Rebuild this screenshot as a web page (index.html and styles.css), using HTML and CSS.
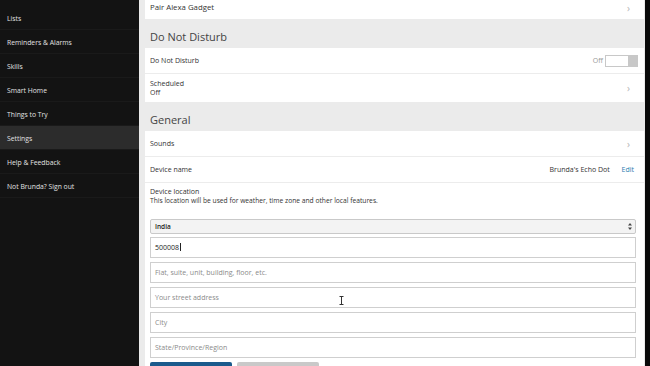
FILE: index.html
```html
<!doctype html>
<html lang="en">
<head>
<meta charset="utf-8">
<title>Alexa Settings</title>
<link rel="stylesheet" href="styles.css">
</head>
<body>

<div class="app">
	<nav class="sidebar">
		<ul>
			<li>Lists</li>
			<li>Reminders &amp; Alarms</li>
			<li>Skills</li>
			<li>Smart Home</li>
			<li>Things to Try</li>
			<li class="--active">Settings</li>
			<li>Help &amp; Feedback</li>
			<li>Not Brunda? Sign out</li>
		</ul>
	</nav>

	<main class="main">
		<div class="card">
			<div class="row row--top">
				<span class="row__big">Pair Alexa Gadget</span>
				<span class="chevron">&rsaquo;</span>
			</div>
		</div>

		<h2 class="section-title">Do Not Disturb</h2>

		<div class="card">
			<div class="row">
				<span>Do Not Disturb</span>
				<span class="toggle-wrap">Off <span class="toggle"><span class="toggle__knob"></span></span></span>
			</div>
			<div class="row row--tall">
				<span class="two-line">Scheduled<br>Off</span>
				<span class="chevron">&rsaquo;</span>
			</div>
		</div>

		<h2 class="section-title">General</h2>

		<div class="card">
			<div class="row">
				<span>Sounds</span>
				<span class="chevron">&rsaquo;</span>
			</div>
			<div class="row">
				<span>Device name</span>
				<span class="device-name">Brunda's Echo Dot <a class="edit">Edit</a></span>
			</div>
			<div class="location">
				<div class="two-line">Device location<br><span class="hint">This location will be used for weather, time zone and other local features.</span></div>

				<div class="form">
					<div class="select">
						<span>India</span>
						<svg class="select__arrows" width="4" height="7" viewBox="0 0 4 7"><path d="M2 0L4 2.5H0z M2 7L4 4.5H0z" fill="#444"/></svg>
					</div>
					<div class="field field--filled">500008<span class="caret"></span></div>
					<div class="field">Flat, suite, unit, building, floor, etc.</div>
					<div class="field">Your street address</div>
					<div class="field">City</div>
					<div class="field">State/Province/Region</div>
					<div class="buttons">
						<span class="btn btn--save"></span>
						<span class="btn btn--cancel"></span>
					</div>
				</div>
			</div>
		</div>

		<svg class="ibeam" width="5" height="9" viewBox="0 0 5 9"><path d="M0.5 0.5h4M2.5 0.5v8M0.5 8.5h4" stroke="#333" stroke-width="1" fill="none"/></svg>
	</main>

	<div class="edge"></div>
</div>

</body>
</html>
```

FILE: styles.css
```css
html, body {
	margin: 0;
	padding: 0;
	height: 100%;
	overflow: hidden;
}

body {
	font-family: "Open Sans", "Liberation Sans", sans-serif;
	font-size: 7px;
	color: #333;
	background: #111;
}

.app {
	display: flex;
	height: 366px;
}

.sidebar {
	width: 139px;
	flex: none;
	background: #131313;
	padding-top: 6px;
}

.sidebar ul {
	margin: 0;
	padding: 0;
	list-style: none;
}

.sidebar li {
	height: 23px;
	line-height: 25px;
	padding-left: 7px;
	color: #e2e2e2;
	font-size: 6.8px;
	border-bottom: 1px solid #1a1a1a;
}

.sidebar li.--active {
	background: #2c2c2c;
}

.main {
	position: relative;
	flex: 1;
	background: #ebebeb;
	padding: 0 1px 0 6px;
	overflow: hidden;
}

.edge {
	width: 5px;
	flex: none;
	background: #0a0a0a;
}

.card {
	background: #fff;
}

.row {
	display: flex;
	align-items: center;
	justify-content: space-between;
	height: 25px;
	padding: 0 14px 0 5px;
	border-top: 1px solid #ececec;
}

.row:first-child {
	border-top: 0;
}

.row--top {
	height: 19px;
	align-items: flex-start;
	padding-top: 2px;
	box-sizing: border-box;
}

.row--top .chevron {
	margin-top: -1px;
}

.row__big {
	font-size: 7.8px;
}

.row--tall {
	height: 28px;
}

.two-line {
	line-height: 9px;
}

.hint {
	font-size: 6.7px;
}

.chevron {
	color: #b5b5b5;
	font-size: 10px;
}

.section-title {
	margin: 0;
	height: 29px;
	line-height: 35px;
	padding-left: 5px;
	font-size: 11px;
	font-weight: normal;
	color: #444;
}

.toggle-wrap {
	display: flex;
	align-items: center;
	gap: 2px;
	margin-right: -8px;
	color: #999;
}

.toggle {
	display: flex;
	justify-content: flex-end;
	width: 31px;
	height: 10px;
	border: 1px solid #c8c8c8;
	background: #fff;
}

.toggle__knob {
	width: 9px;
	background: #c8c8c8;
}

.device-name {
	margin-right: -4px;
}

.edit {
	margin-left: 10px;
	color: #2b7bb0;
}

.location {
	padding: 4px 8px 0 5px;
	border-top: 1px solid #ececec;
}

.form {
	margin-top: 14px;
	display: flex;
	flex-direction: column;
	gap: 4px;
}

.select {
	display: flex;
	align-items: center;
	justify-content: space-between;
	height: 13px;
	padding: 0 3px 0 4px;
	border: 1px solid #c9c9c9;
	border-radius: 2px;
	background: #f3f3f3;
	color: #222;
	font-weight: 600;
	font-size: 6.5px;
}

.field {
	height: 19px;
	line-height: 19px;
	padding-left: 4px;
	border: 1px solid #cfcfcf;
	color: #8a8a8a;
	background: #fff;
}

.field:nth-child(2) {
	margin-top: -1px;
}

.field--filled {
	color: #222;
}

.caret {
	display: inline-block;
	width: 1px;
	height: 8px;
	margin-left: 1px;
	background: #222;
	vertical-align: -1px;
}

.buttons {
	display: flex;
	gap: 5px;
}

.btn {
	display: block;
	width: 82px;
	height: 12px;
	border-radius: 2px 2px 0 0;
}

.btn--save {
	background: #1a5a8c;
}

.btn--cancel {
	background: #c9c9c9;
}

.ibeam {
	position: absolute;
	left: 200px;
	top: 296px;
}
```
